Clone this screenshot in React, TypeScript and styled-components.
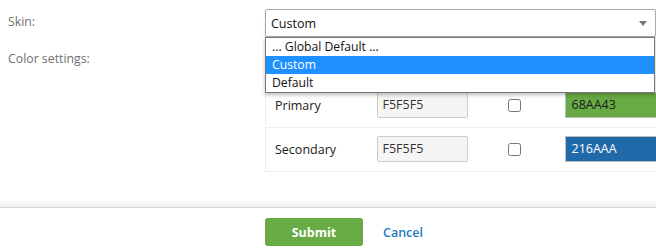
import styled, { createGlobalStyle } from "styled-components";

const GlobalStyle = createGlobalStyle`
  html, body {
    margin: 0;
    padding: 0;
    background: #fff;
    overflow: hidden;
  }
  body {
    font-family: "Open Sans", "Noto Sans", sans-serif;
    font-size: 12px;
    color: #222;
  }
`;

const Page = styled.div`
  width: 656px;
  height: 251px;
  overflow: hidden;
  display: flex;
  flex-direction: column;
`;

const Form = styled.div`
  padding: 9px 0 0 8px;
  display: flex;
  flex-direction: column;
  gap: 8px;
  height: 198px;
`;

const FieldRow = styled.div`
  display: grid;
  grid-template-columns: 257px minmax(0, 1fr);
  align-items: start;
`;

const Label = styled.div<{ $top: number }>`
  padding-top: ${(p) => p.$top}px;
  line-height: 18px;
  color: #707070;
  font-size: 12.3px;
`;

const SelectWrap = styled.div`
  position: relative;
  width: 391px;
`;

const SelectBox = styled.div`
  height: 26px;
  border: 1px solid #aaa;
  border-radius: 2px;
  box-shadow: 0 1px 2px rgba(0, 0, 0, 0.15);
  display: flex;
  align-items: center;
  justify-content: space-between;
  padding: 0 5px 0 5px;
  font-size: 12.5px;
  color: #111;
  background: #fff;
`;

const Arrow = styled.span`
  width: 0;
  height: 0;
  border-left: 4px solid transparent;
  border-right: 4px solid transparent;
  border-top: 5px solid #777;
  margin-right: 3px;
`;

const Menu = styled.ul`
  position: absolute;
  top: 28px;
  left: 0;
  width: 388px;
  margin: 0;
  padding: 0;
  list-style: none;
  border: 1px solid #767676;
  background: #fff;
  box-shadow: 0 2px 4px rgba(0, 0, 0, 0.25);
  z-index: 5;
`;

const Option = styled.li<{ $active?: boolean }>`
  height: 18px;
  line-height: 18px;
  padding-left: 6px;
  font-size: 12.2px;
  background: ${(p) => (p.$active ? "#1e90ff" : "#fff")};
  color: ${(p) => (p.$active ? "#fff" : "#111")};
`;

const Table = styled.table`
  border-collapse: collapse;
  width: 100%;
  table-layout: fixed;
  font-size: 12.5px;
`;

const Th = styled.th<{ $w?: number }>`
  box-sizing: border-box;
  width: ${(p) => (p.$w ? `${p.$w}px` : "auto")};
  height: 38px;
  text-align: left;
  font-weight: 600;
  color: #7a1f1f;
  padding: 0 10px;
  border-bottom: 1px solid #eee;
  white-space: nowrap;
  overflow: hidden;
`;

const Td = styled.td`
  height: 43px;
  padding: 0 10px;
  border-bottom: 1px solid #eee;
  vertical-align: middle;
  &:first-child {
    border-left: 1px solid #eee;
    padding-left: 9px;
  }
`;

const CheckCell = styled(Td)`
  text-align: center;
  padding: 0;
`;

const ValueCell = styled(Td)`
  padding-right: 0;
`;

const TextInput = styled.div`
  width: 79px;
  height: 24px;
  line-height: 24px;
  padding: 0 5px;
  border: 1px solid #ccc;
  border-radius: 2px;
  background: #f5f5f5;
  color: #333;
`;

const ColorInput = styled.div<{ $bg: string; $fg: string }>`
  box-sizing: border-box;
  width: 100%;
  height: 26px;
  line-height: 24px;
  padding: 0 6px;
  border: 1px solid #bbb;
  border-right: none;
  background: ${(p) => p.$bg};
  color: ${(p) => p.$fg};
`;

const Check = styled.input`
  width: 13px;
  height: 13px;
  margin: 4px 0 0 -3px;
`;

const Footer = styled.div`
  border-top: 1px solid #d8d8d8;
  position: relative;
  display: grid;
  grid-template-columns: 265px auto auto 1fr;
  align-items: center;
  padding-top: 10px;
  &::before {
    content: "";
    position: absolute;
    left: 0;
    right: 0;
    top: -8px;
    height: 7px;
    background: linear-gradient(rgba(0, 0, 0, 0), rgba(0, 0, 0, 0.07));
  }
`;

const SubmitButton = styled.button`
  grid-column: 2;
  width: 98px;
  height: 28px;
  border: none;
  border-radius: 3px;
  background: #68aa43;
  color: #fff;
  font-family: inherit;
  font-weight: 700;
  font-size: 12.5px;
`;

const CancelLink = styled.a`
  margin-left: 20px;
  color: #1d7cc3;
  font-weight: 600;
  font-size: 12.5px;
`;

const rows = [
  { name: "Primary", def: "F5F5F5", value: "68AA43", bg: "#68aa43", fg: "#1a1a1a" },
  { name: "Secondary", def: "F5F5F5", value: "216AAA", bg: "#216aaa", fg: "#fff" },
];

export default function App() {
  return (
    <Page>
      <GlobalStyle />
      <Form>
        <FieldRow>
          <Label $top={4}>Skin:</Label>
          <SelectWrap>
            <SelectBox>
              Custom
              <Arrow />
            </SelectBox>
            <Menu>
              <Option>... Global Default ...</Option>
              <Option $active>Custom</Option>
              <Option>Default</Option>
            </Menu>
          </SelectWrap>
        </FieldRow>
        <FieldRow>
          <Label $top={5}>Color settings:</Label>
          <Table>
            <thead>
              <tr>
                <Th $w={101}>Color</Th>
                <Th $w={111}>Default</Th>
                <Th $w={77}>Override</Th>
                <Th>Value</Th>
              </tr>
            </thead>
            <tbody>
              {rows.map((r) => (
                <tr key={r.name}>
                  <Td>{r.name}</Td>
                  <Td>
                    <TextInput>{r.def}</TextInput>
                  </Td>
                  <CheckCell>
                    <Check type="checkbox" />
                  </CheckCell>
                  <ValueCell>
                    <ColorInput $bg={r.bg} $fg={r.fg}>
                      {r.value}
                    </ColorInput>
                  </ValueCell>
                </tr>
              ))}
            </tbody>
          </Table>
        </FieldRow>
      </Form>
      <Footer>
        <SubmitButton>Submit</SubmitButton>
        <CancelLink>Cancel</CancelLink>
      </Footer>
    </Page>
  );
}
